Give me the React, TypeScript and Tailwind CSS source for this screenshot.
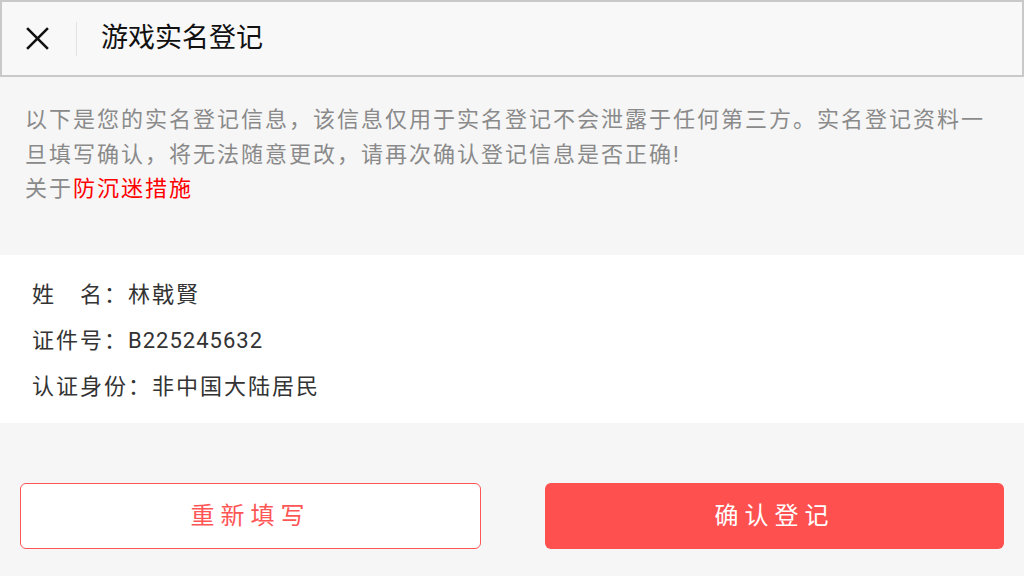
const cjk = "font-['Roboto','Noto_Sans_CJK_SC',sans-serif]";

function CloseIcon() {
  return (
    <svg className="h-[25px] w-[25px]" viewBox="0 0 24 24" fill="none" stroke="#111" strokeWidth={2.5} aria-hidden="true">
      <path d="M2 2l20 20M22 2L2 22" />
    </svg>
  );
}

export default function App() {
  return (
    <div className={`flex h-[576px] w-[1024px] flex-col overflow-hidden bg-[#f6f6f6] ${cjk}`}>
      <header className="flex h-[77px] shrink-0 items-center border-2 border-[#c9c9c9] bg-[#f8f8f8]">
        <div className="ml-[23px] flex items-center">
          <CloseIcon />
        </div>
        <div className="ml-[26px] h-[34px] w-px bg-[#e2e2e2]" />
        <h1 className="ml-[24px] text-[27px] leading-none text-[#111]">游戏实名登记</h1>
      </header>

      <section className="h-[178px] shrink-0 px-[25px] pt-[26px]">
        <p className="text-[22px] leading-[34.5px] tracking-[2px] text-[#8a8a8a]">
          以下是您的实名登记信息，该信息仅用于实名登记不会泄露于任何第三方。实名登记资料一旦填写确认，将无法随意更改，请再次确认登记信息是否正确!
          <br />
          关于<span className="text-[#ff0000]">防沉迷措施</span>
        </p>
      </section>

      <section className="flex h-[168px] shrink-0 flex-col justify-center gap-[16px] bg-white px-[32px] pt-[4px] text-[22px] leading-[30px] tracking-[2px] text-[#333]">
        <div>姓　名：林戟賢</div>
        <div>
          证件号：<span className="tracking-[1px]">B225245632</span>
        </div>
        <div>认证身份：非中国大陆居民</div>
      </section>

      <div className="flex flex-1 items-start gap-[64px] px-[20px] pt-[60px]">
        <button
          type="button"
          className="flex h-[66px] flex-1 items-center justify-center rounded-[6px] border-[1.5px] border-[#ff5555] bg-white text-[24px] tracking-[6px] text-[#ff5555]"
        >
          重新填写
        </button>
        <button
          type="button"
          className="flex h-[66px] flex-1 items-center justify-center rounded-[6px] bg-[#ff5050] text-[24px] tracking-[6px] text-white"
        >
          确认登记
        </button>
      </div>
    </div>
  );
}
